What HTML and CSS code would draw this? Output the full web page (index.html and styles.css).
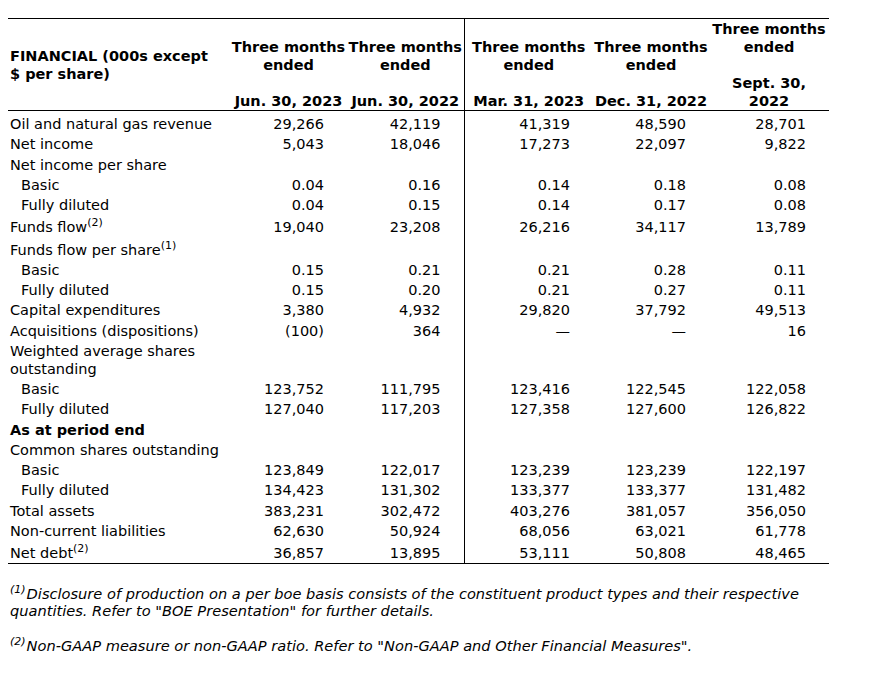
FILE: index.html
```html
<!DOCTYPE html>
<html lang="en">
<head>
<meta charset="utf-8">
<title>Financial highlights</title>
<link rel="stylesheet" href="styles.css">
</head>
<body>
<table class="fin">
  <colgroup>
    <col class="c-label">
    <col class="c-1">
    <col class="c-2">
    <col class="c-3">
    <col class="c-4">
    <col class="c-5">
  </colgroup>
  <thead>
    <tr>
      <th class="h-label">FINANCIAL (000s except $ per share)</th>
      <th>Three months<br>ended<br><br>Jun. 30, 2023</th>
      <th class="sep">Three months<br>ended<br><br>Jun. 30, 2022</th>
      <th>Three months<br>ended<br><br>Mar. 31, 2023</th>
      <th>Three months<br>ended<br><br>Dec. 31, 2022</th>
      <th>Three months<br>ended<br><br>Sept. 30,<br>2022</th>
    </tr>
  </thead>
  <tbody>
    <tr class="first"><td>Oil and natural gas revenue</td><td class="n">29,266</td><td class="n sep">42,119</td><td class="n">41,319</td><td class="n">48,590</td><td class="n">28,701</td></tr>
    <tr><td>Net income</td><td class="n">5,043</td><td class="n sep">18,046</td><td class="n">17,273</td><td class="n">22,097</td><td class="n">9,822</td></tr>
    <tr><td>Net income per share</td><td class="n"></td><td class="n sep"></td><td class="n"></td><td class="n"></td><td class="n"></td></tr>
    <tr><td class="ind">Basic</td><td class="n">0.04</td><td class="n sep">0.16</td><td class="n">0.14</td><td class="n">0.18</td><td class="n">0.08</td></tr>
    <tr><td class="ind">Fully diluted</td><td class="n">0.04</td><td class="n sep">0.15</td><td class="n">0.14</td><td class="n">0.17</td><td class="n">0.08</td></tr>
    <tr class="has-sup"><td>Funds flow<sup>(2)</sup></td><td class="n">19,040</td><td class="n sep">23,208</td><td class="n">26,216</td><td class="n">34,117</td><td class="n">13,789</td></tr>
    <tr class="has-sup"><td>Funds flow per share<sup>(1)</sup></td><td class="n"></td><td class="n sep"></td><td class="n"></td><td class="n"></td><td class="n"></td></tr>
    <tr><td class="ind">Basic</td><td class="n">0.15</td><td class="n sep">0.21</td><td class="n">0.21</td><td class="n">0.28</td><td class="n">0.11</td></tr>
    <tr><td class="ind">Fully diluted</td><td class="n">0.15</td><td class="n sep">0.20</td><td class="n">0.21</td><td class="n">0.27</td><td class="n">0.11</td></tr>
    <tr><td>Capital expenditures</td><td class="n">3,380</td><td class="n sep">4,932</td><td class="n">29,820</td><td class="n">37,792</td><td class="n">49,513</td></tr>
    <tr><td>Acquisitions (dispositions)</td><td class="n">(100)</td><td class="n sep">364</td><td class="n">—</td><td class="n">—</td><td class="n">16</td></tr>
    <tr><td>Weighted average shares outstanding</td><td class="n"></td><td class="n sep"></td><td class="n"></td><td class="n"></td><td class="n"></td></tr>
    <tr><td class="ind">Basic</td><td class="n">123,752</td><td class="n sep">111,795</td><td class="n">123,416</td><td class="n">122,545</td><td class="n">122,058</td></tr>
    <tr><td class="ind">Fully diluted</td><td class="n">127,040</td><td class="n sep">117,203</td><td class="n">127,358</td><td class="n">127,600</td><td class="n">126,822</td></tr>
    <tr><td class="b">As at period end</td><td class="n"></td><td class="n sep"></td><td class="n"></td><td class="n"></td><td class="n"></td></tr>
    <tr><td>Common shares outstanding</td><td class="n"></td><td class="n sep"></td><td class="n"></td><td class="n"></td><td class="n"></td></tr>
    <tr><td class="ind">Basic</td><td class="n">123,849</td><td class="n sep">122,017</td><td class="n">123,239</td><td class="n">123,239</td><td class="n">122,197</td></tr>
    <tr><td class="ind">Fully diluted</td><td class="n">134,423</td><td class="n sep">131,302</td><td class="n">133,377</td><td class="n">133,377</td><td class="n">131,482</td></tr>
    <tr><td>Total assets</td><td class="n">383,231</td><td class="n sep">302,472</td><td class="n">403,276</td><td class="n">381,057</td><td class="n">356,050</td></tr>
    <tr><td>Non-current liabilities</td><td class="n">62,630</td><td class="n sep">50,924</td><td class="n">68,056</td><td class="n">63,021</td><td class="n">61,778</td></tr>
    <tr class="has-sup"><td>Net debt<sup>(2)</sup></td><td class="n">36,857</td><td class="n sep">13,895</td><td class="n">53,111</td><td class="n">50,808</td><td class="n">48,465</td></tr>
  </tbody>
</table>
<div class="notes">
  <p><sup>(1)</sup>Disclosure of production on a per boe basis consists of the constituent product types and their respective quantities. Refer to "BOE Presentation" for further details.</p>
  <p><sup>(2)</sup>Non-GAAP measure or non-GAAP ratio. Refer to "Non-GAAP and Other Financial Measures".</p>
</div>
</body>
</html>
```
FILE: styles.css
```css
html, body {
  margin: 0;
  background: #fff;
}
body {
  padding: 18px 8px 0 8px;
  font-family: "DejaVu Sans", Verdana, sans-serif;
  font-size: 14.5px;
  color: #000;
}
.fin {
  border-collapse: collapse;
  table-layout: fixed;
  width: 821px;
  border-top: 1px solid #000;
  border-bottom: 1px solid #000;
}
.c-label { width: 222px; }
.c-1 { width: 117px; }
.c-2 { width: 117px; }
.c-3 { width: 129px; }
.c-4 { width: 116px; }
.c-5 { width: 120px; }
.fin th {
  font-weight: bold;
  text-align: center;
  vertical-align: bottom;
  line-height: 18px;
  padding: 1px 0 0 0;
  border-bottom: 1px solid #000;
  white-space: nowrap;
}
.fin th.h-label {
  text-align: left;
  vertical-align: middle;
  white-space: normal;
  padding-left: 2px;
  padding-right: 13px;
}
.fin td {
  line-height: 18px;
  padding: 1px 0 1.25px 2px;
  vertical-align: bottom;
}
.fin tr.first td {
  padding-top: 4px;
}
.fin tr.has-sup td {
  padding-top: 3px;
}
.fin .sep {
  border-right: 1px solid #000;
}
.fin td.n {
  text-align: right;
  padding-right: 23px;
  padding-left: 0;
}
.fin td.ind {
  padding-left: 13px;
}
.fin td.b {
  font-weight: bold;
}
.fin sup {
  font-size: 11px;
  line-height: 0;
  vertical-align: 6px;
}
.notes {
  padding-top: 21px;
  padding-left: 2px;
  width: 806px;
  font-style: italic;
  font-family: "DejaVu Sans", sans-serif;
  font-size: 14.6px;
  line-height: 17px;
}
.notes p {
  margin: 0 0 18px 0;
}
.notes sup {
  font-size: 11px;
  line-height: 0;
  vertical-align: 6px;
  margin-right: 1px;
}
```
